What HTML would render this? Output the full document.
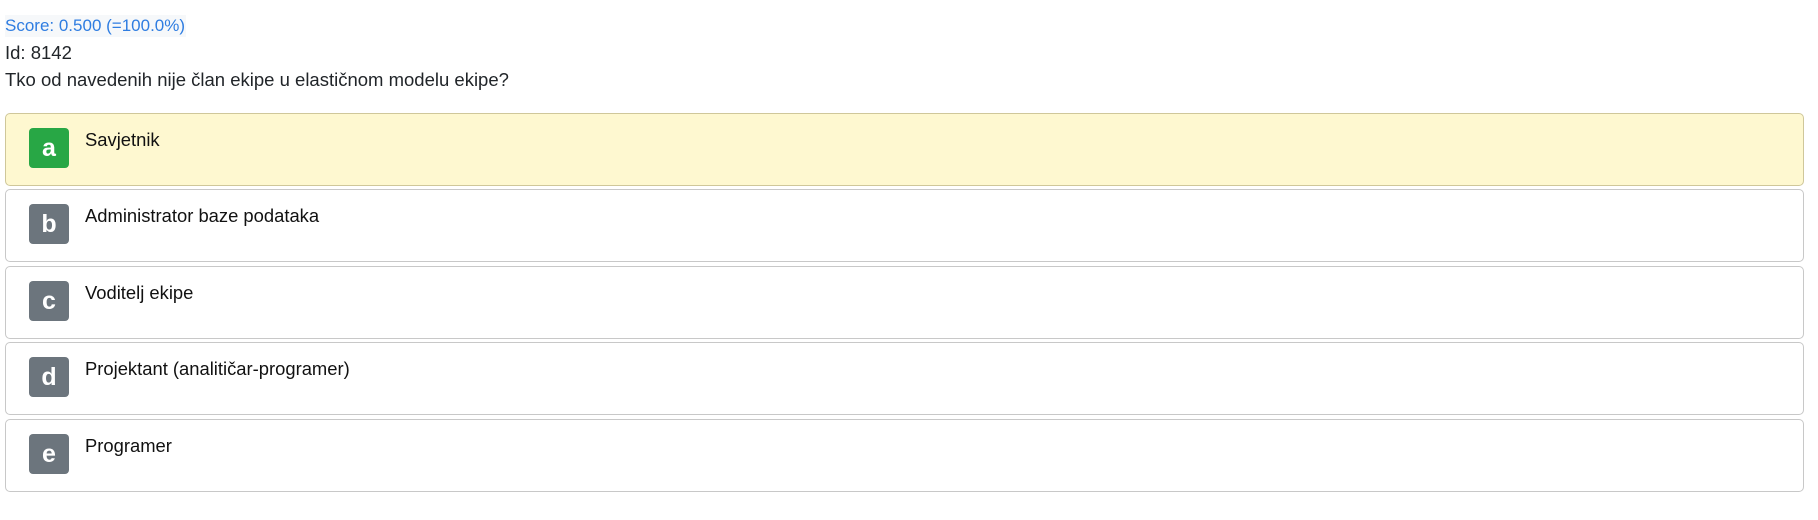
<!DOCTYPE html>
<html><head><meta charset="utf-8"><style>
body{margin:0;background:#fff;font-family:"Liberation Sans",sans-serif;color:#212529;width:1818px;height:520px;overflow:hidden}
.l{position:absolute;left:5px;font-size:18.5px;line-height:22px}
.opt{position:absolute;left:5px;width:1797px;height:71px;border:1px solid #c8c8c8;border-radius:5px;background:#fff}
.opt.s{background:#fef8d0;border-color:#cfc79a}
.b{position:absolute;left:23px;top:14px;width:40px;height:40px;border-radius:4px;background:#6c757d;color:#fff;font-weight:bold;font-size:25px;line-height:40px;text-align:center}
.s .b{background:#28a745}
.t{position:absolute;left:79px;top:15px;font-size:18.4px;line-height:22px;color:#111}
</style></head><body>
<div class="l" style="top:15px;font-size:17px;color:#2f7de1;background:#f6f8fa;padding-right:1px">Score: 0.500 (=100.0%)</div>
<div class="l" style="top:42px">Id: 8142</div>
<div class="l" style="top:69px">Tko od navedenih nije član ekipe u elastičnom modelu ekipe?</div>
<div class="opt s" style="top:113px"><div class="b">a</div><div class="t">Savjetnik</div></div>
<div class="opt" style="top:189px"><div class="b">b</div><div class="t">Administrator baze podataka</div></div>
<div class="opt" style="top:266px"><div class="b">c</div><div class="t">Voditelj ekipe</div></div>
<div class="opt" style="top:342px"><div class="b">d</div><div class="t">Projektant (analitičar-programer)</div></div>
<div class="opt" style="top:419px"><div class="b">e</div><div class="t">Programer</div></div>
</body></html>
